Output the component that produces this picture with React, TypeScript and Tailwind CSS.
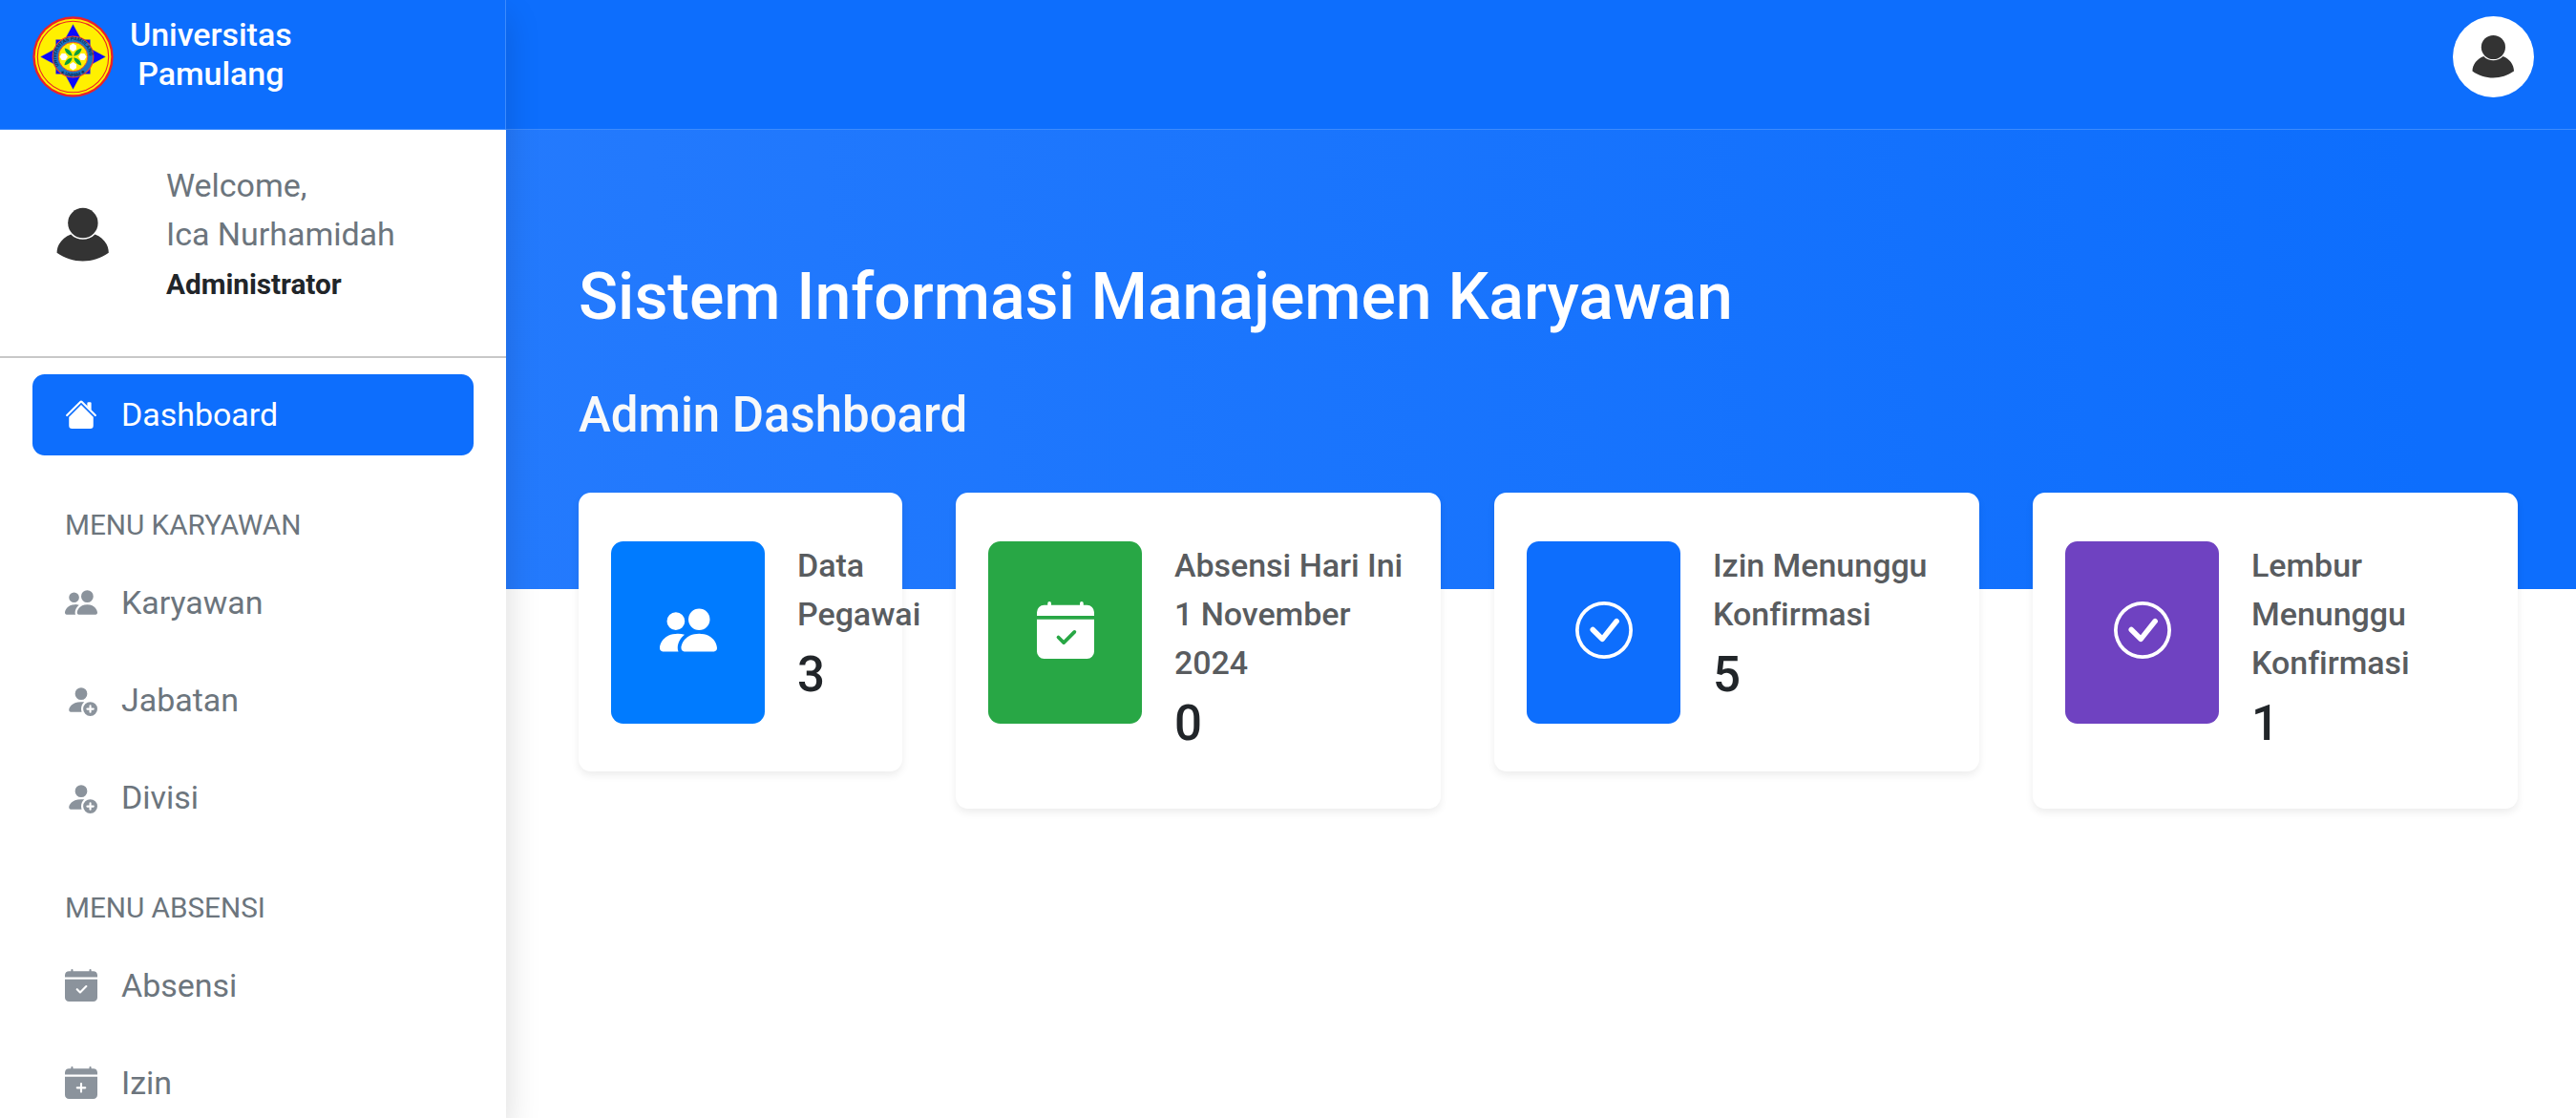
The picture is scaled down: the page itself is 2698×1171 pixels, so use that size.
import type { ComponentType, ReactNode } from 'react';
import {
  BsCalendarCheckFill,
  BsCalendarPlusFill,
  BsCheckCircle,
  BsPeopleFill,
  BsPersonFillAdd,
} from 'react-icons/bs';

type IconType = ComponentType<{ className?: string }>;

function HouseIcon({ className }: { className?: string }) {
  return (
    <svg viewBox="0 0 16 16" fill="currentColor" className={className}>
      <path d="m8 3.293 6 6V13.5a1.5 1.5 0 0 1-1.5 1.5h-9A1.5 1.5 0 0 1 2 13.5V9.293l6-6zm5-.793V6l-2-2V2.5a.5.5 0 0 1 .5-.5h1a.5.5 0 0 1 .5.5z" />
      <path d="M7.293 1.5a1 1 0 0 1 1.414 0l6.647 6.646a.5.5 0 0 1-.708.708L8 2.207 1.354 8.854a.5.5 0 1 1-.708-.708L7.293 1.5z" />
    </svg>
  );
}

function AvatarIcon({ className }: { className?: string }) {
  return (
    <svg viewBox="0 0 85 85" className={className}>
      <rect width="85" height="85" fill="#fff" />
      <circle cx="42.4" cy="32.5" r="12.6" fill="#333" />
      <path
        d="M32.3 42C25.500 44.500 20.500 50.500 20.500 57.600C27 62.3 34.500 64.600 42.300 64.600C50.200 64.600 57.500 62.300 64 57.600C64 50.500 59.300 44.500 52.500 42C49.500 45 46 46.300 42.400 46.300C38.800 46.300 35 45 32.300 42Z"
        fill="#333"
      />
    </svg>
  );
}

const quarters = [0, 90, 180, 270];

function UniversityLogo({ className }: { className?: string }) {
  return (
    <svg viewBox="-42.5 -42.5 85 85" className={className}>
      <defs>
        <path id="seal-top" d="M-14.500 9.500A17.300 17.300 0 1 1 14.500 9.500" />
        <path id="seal-bottom" d="M-15 14.500A21 21 0 0 0 15 14.500" />
      </defs>
      <circle r="42.200" fill="#ec2227" />
      <circle r="39.800" fill="#fff000" />
      <circle r="37.200" fill="none" stroke="#ec2227" strokeWidth="1.100" />
      <rect x="-18" y="-18" width="36" height="36" fill="#0a0aff" />
      {quarters.map((a) => (
        <g key={a} transform={`rotate(${a})`}>
          <path d="M0 -34.500L-9.500 -17H9.500Z" fill="#0a0aff" stroke="#fff000" strokeWidth="0.500" />
        </g>
      ))}
      <circle r="21.300" fill="#1d76c4" stroke="#e8432e" strokeWidth="1.200" />
      <text fill="#12305c" fontSize="5.400" fontWeight="700" fontFamily="Roboto, sans-serif">
        <textPath href="#seal-top" textLength="63">UNIVERSITAS PAMULANG</textPath>
      </text>
      <text fill="#12305c" fontSize="5" fontWeight="700" fontFamily="Roboto, sans-serif">
        <textPath href="#seal-bottom" startOffset="50%" textAnchor="middle">★ UNPAM ★</textPath>
      </text>
      <circle r="15.300" fill="#fff000" stroke="#e8432e" strokeWidth="0.900" />
      {quarters.map((a) => (
        <g key={a} transform={`rotate(${a})`}>
          <path d="M0 -14L3.500 -11.800L3.600 -8L0 -5.500L-3.600 -8L-3.500 -11.800Z" fill="#fff" />
          <path d="M0.800 -0.800C1.500 -5.500 5 -8.500 9 -8.800C8.700 -5 5.500 -1.500 0.800 -0.800Z" fill="#0b9b3c" />
        </g>
      ))}
    </svg>
  );
}

function NavItem({ icon: Icon, label, active = false }: { icon: IconType; label: string; active?: boolean }) {
  return (
    <a
      className={
        active
          ? 'flex h-[85px] items-center gap-[25px] rounded-[12.75px] bg-[#0d6efd] px-[34px] text-white'
          : 'flex h-[85px] items-center gap-[25px] rounded-[12.75px] px-[34px] text-[#6c757d]'
      }
    >
      <Icon className={active ? 'mb-[2px] size-[34px]' : 'mb-[2px] size-[34px] text-[#8b939c]'} />
      <span className="leading-[51px]">{label}</span>
    </a>
  );
}

function NavGroup({ title, children }: { title: string; children: ReactNode }) {
  return (
    <section className="mt-[50px]">
      <h6 className="mb-[17px] px-[34px] text-[29.75px] leading-[45px] text-[#6c757d]">{title}</h6>
      <div className="flex flex-col gap-[17px]">{children}</div>
    </section>
  );
}

function Sidebar() {
  return (
    <aside className="relative z-10 flex w-[530px] shrink-0 flex-col overflow-visible bg-white shadow-[0_17px_34px_rgba(0,0,0,0.15)]">
      <div className="flex h-[136px] shrink-0 items-start gap-[17px] border-r border-b border-[#3d8bfd] bg-[#0d6efd] pt-[17px] pl-[34px]">
        <UniversityLogo className="size-[85px]" />
        <div className="-mt-px text-center leading-[40.8px] font-medium text-white">
          Universitas
          <br />
          Pamulang
        </div>
      </div>

      <div className="flex h-[239px] shrink-0 items-start gap-[34px] border-b-2 border-[#c8c8c8] pt-[33px] pl-[34px]">
        <AvatarIcon className="mt-[24px] size-[106px]" />
        <div className="leading-[51px] text-[#6c757d]">
          <p>Welcome,</p>
          <p>Ica Nurhamidah</p>
          <p className="pt-px text-[29.75px] font-bold text-[#212529]">Administrator</p>
        </div>
      </div>

      <nav className="px-[34px] pt-[17px]">
        <NavItem icon={HouseIcon} label="Dashboard" active />
        <NavGroup title="MENU KARYAWAN">
          <NavItem icon={BsPeopleFill} label="Karyawan" />
          <NavItem icon={BsPersonFillAdd} label="Jabatan" />
          <NavItem icon={BsPersonFillAdd} label="Divisi" />
        </NavGroup>
        <NavGroup title="MENU ABSENSI">
          <NavItem icon={BsCalendarCheckFill} label="Absensi" />
          <NavItem icon={BsCalendarPlusFill} label="Izin" />
        </NavGroup>
      </nav>
    </aside>
  );
}

interface Stat {
  icon: IconType;
  tile: string;
  lines: string[];
  value: number;
  height: string;
}

const stats: Stat[] = [
  { icon: BsPeopleFill, tile: 'bg-[#007bff]', lines: ['Data', 'Pegawai'], value: 3, height: 'h-[292.5px]' },
  {
    icon: BsCalendarCheckFill,
    tile: 'bg-[#28a745]',
    lines: ['Absensi Hari Ini', '1 November', '2024'],
    value: 0,
    height: 'h-[331px]',
  },
  { icon: BsCheckCircle, tile: 'bg-[#0d6efd]', lines: ['Izin Menunggu', 'Konfirmasi'], value: 5, height: 'h-[292.5px]' },
  {
    icon: BsCheckCircle,
    tile: 'bg-[#6f42c1]',
    lines: ['Lembur', 'Menunggu', 'Konfirmasi'],
    value: 1,
    height: 'h-[331px]',
  },
];

function StatCard({ icon: Icon, tile, lines, value, height }: Stat) {
  return (
    <article
      className={`flex items-start gap-[34px] rounded-[12.75px] bg-white px-[34px] pt-[51px] shadow-[0_4px_8px_rgba(0,0,0,0.075)] ${height}`}
    >
      <div
        className={`flex h-[191px] w-[161px] shrink-0 items-center justify-center rounded-[12.75px] pb-[5px] text-white ${tile}`}
      >
        <Icon className="size-[60px]" />
      </div>
      <div className="font-medium whitespace-nowrap">
        {lines.map((line) => (
          <p key={line} className="leading-[51px] text-[#595c5f]">
            {line}
          </p>
        ))}
        <p className="mt-[7px] text-[51px] leading-[61px] text-[#212529]">{value}</p>
      </div>
    </article>
  );
}

export default function App() {
  return (
    <div className="flex h-[1171px] w-[2698px] overflow-hidden bg-white font-['Roboto',sans-serif] text-[34px] tracking-[-0.001em]">
      <Sidebar />
      <div className="flex grow flex-col">
        <header className="flex h-[136px] shrink-0 items-start justify-end border-b border-[#3d8bfd] bg-[#0d6efd] pt-[17px] pr-[44px]">
          <AvatarIcon className="size-[85px] rounded-full" />
        </header>
        <main>
          <div className="h-[481px] bg-linear-[87deg,#247afd,#0d6efd_92%] pt-[134px] pl-[76px] text-white">
            <h1 className="text-[68px] leading-[82px] font-medium tracking-[-0.06px]">Sistem Informasi Manajemen Karyawan</h1>
            <h2 className="mt-[52px] text-[51px] leading-[61px] font-medium text-[#f8f9fa]">Admin Dashboard</h2>
          </div>
          <div className="-mt-[101.5px] grid grid-cols-[338.5px_507.5px_507.5px_507.5px] items-start gap-[56.5px] pl-[76px]">
            {stats.map((s) => (
              <StatCard key={s.lines.join(' ')} {...s} />
            ))}
          </div>
        </main>
      </div>
    </div>
  );
}
